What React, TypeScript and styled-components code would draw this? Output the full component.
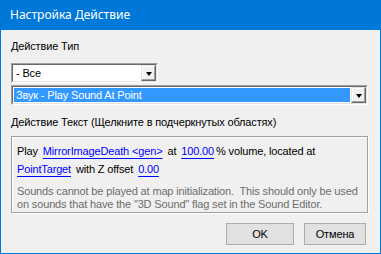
import React from 'react';
import styled, { createGlobalStyle } from 'styled-components';

const GlobalStyle = createGlobalStyle`
  html, body {
    margin: 0;
    padding: 0;
    background: #ffffff;
  }
  body {
    font-family: "Liberation Sans", Arial, sans-serif;
    font-size: 11px;
    letter-spacing: -0.15px;
    color: #000000;
  }
`;

const Window = styled.div`
  width: 381px;
  height: 254px;
  box-sizing: border-box;
  border: 1px solid #0078d7;
  border-top: none;
  background: #f0f0f0;
  display: flex;
  flex-direction: column;
`;

const TitleBar = styled.div`
  height: 30px;
  margin: 0 -1px;
  background: #0078d7;
  color: #ffffff;
  display: flex;
  align-items: center;
  padding: 0 0 1px 10px;
  box-sizing: border-box;
  font-family: "Noto Sans", "Open Sans", sans-serif;
  font-size: 12px;
  letter-spacing: 0;
`;

const Content = styled.div`
  flex: 1;
  display: flex;
  flex-direction: column;
  padding: 9px 12px 0 10px;
`;

const Label = styled.div<{ $top?: number }>`
  line-height: 13px;
  margin-top: ${({ $top }) => $top ?? 0}px;
  white-space: nowrap;
`;

const Combo = styled.div<{ $width?: number; $top: number }>`
  width: ${({ $width }) => ($width ? `${$width}px` : '100%')};
  height: 20px;
  margin-top: ${({ $top }) => $top}px;
  box-sizing: border-box;
  border: 1px solid;
  border-color: #a0a0a0 #ffffff #ffffff #a0a0a0;
  display: flex;
`;

const ComboInner = styled.div`
  flex: 1;
  display: flex;
  border: 1px solid;
  border-color: #696969 #e3e3e3 #e3e3e3 #696969;
  background: #ffffff;
  min-width: 0;
`;

const ComboValue = styled.div<{ $selected?: boolean }>`
  flex: 1;
  margin: 1px;
  padding-left: 2px;
  line-height: 14px;
  background: ${({ $selected }) => ($selected ? '#3399ff' : '#ffffff')};
  color: ${({ $selected }) => ($selected ? '#ffffff' : '#000000')};
  white-space: nowrap;
  overflow: hidden;
`;

const DropButton = styled.div`
  width: 15px;
  box-sizing: border-box;
  background: #f0f0f0;
  border: 1px solid;
  border-color: #e3e3e3 #696969 #696969 #e3e3e3;
  box-shadow: inset -1px -1px 0 #a0a0a0, inset 1px 1px 0 #ffffff;
  display: flex;
  align-items: center;
  justify-content: center;
`;

const Arrow = styled.div`
  width: 0;
  height: 0;
  border-left: 3.5px solid transparent;
  border-right: 3.5px solid transparent;
  border-top: 4px solid #000000;
  margin-top: 1px;
`;

const TextBox = styled.div`
  margin-top: 7px;
  height: 77px;
  box-sizing: border-box;
  border: 1px solid #a0a0a0;
  box-shadow: inset 1px 1px 0 #ffffff, 1px 1px 0 #ffffff;
  padding: 5px 5px 0 5px;
  display: flex;
  flex-direction: column;
`;

const ActionLine = styled.div`
  line-height: 18px;
  white-space: nowrap;
`;

const Param = styled.span<{ $first?: boolean }>`
  color: #0000ff;
  text-decoration: underline;
  text-underline-offset: 3px;
  margin: 0 2px 0 ${({ $first }) => ($first ? 0 : 5)}px;
`;

const Spaced = styled.span`
  margin-left: 3px;
`;

const Hint = styled.div`
  margin-top: 7px;
  line-height: 13px;
  color: #6d6d6d;
`;

const ButtonRow = styled.div`
  display: flex;
  justify-content: flex-end;
  gap: 10px;
  margin-top: 10px;
  padding-right: 2px;
`;

const DialogButton = styled.div<{ $width: number }>`
  width: ${({ $width }) => $width}px;
  height: 22px;
  box-sizing: border-box;
  border: 1px solid #adadad;
  background: #e1e1e1;
  display: flex;
  align-items: center;
  justify-content: center;
  padding-bottom: 1px;
`;

export default function App() {
  return (
    <>
      <GlobalStyle />
      <Window>
        <TitleBar>Настройка Действие</TitleBar>
        <Content>
          <Label $top={1}>Действие Тип</Label>
          <Combo $width={147} $top={10}>
            <ComboInner>
              <ComboValue>- Все</ComboValue>
              <DropButton><Arrow /></DropButton>
            </ComboInner>
          </Combo>
          <Combo $top={2}>
            <ComboInner>
              <ComboValue $selected>Звук - Play Sound At Point</ComboValue>
              <DropButton><Arrow /></DropButton>
            </ComboInner>
          </Combo>
          <Label $top={11}>Действие Текст (Щелкните в подчеркнутых областях)</Label>
          <TextBox>
            <ActionLine>
              Play<Param>MirrorImageDeath &lt;gen&gt;</Param><Spaced>at</Spaced>
              <Param>100.00</Param>% volume, located at
            </ActionLine>
            <ActionLine>
              <Param $first>PointTarget</Param><Spaced>with Z offset</Spaced>
              <Param>0.00</Param>
            </ActionLine>
            <Hint>
              Sounds cannot be played at map initialization.&nbsp; This should only be used on sounds that have the "3D Sound" flag set in the Sound Editor.
            </Hint>
          </TextBox>
          <ButtonRow>
            <DialogButton $width={68}>OK</DialogButton>
            <DialogButton $width={62}>Отмена</DialogButton>
          </ButtonRow>
        </Content>
      </Window>
    </>
  );
}
